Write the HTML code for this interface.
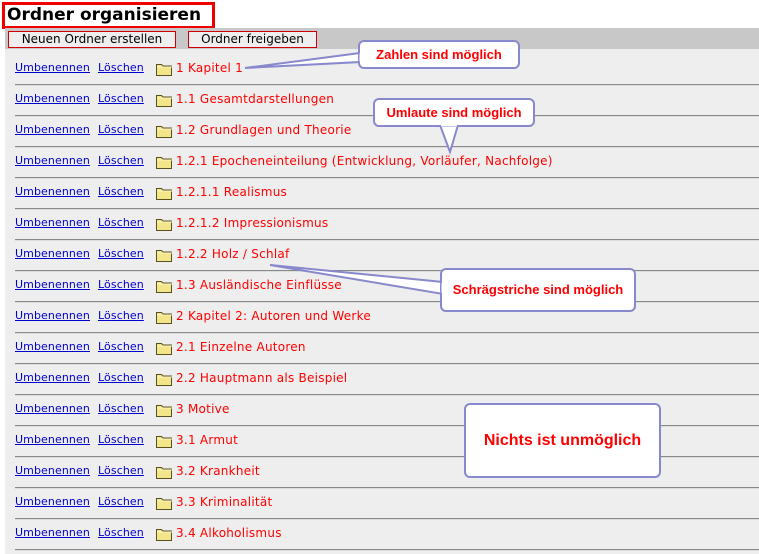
<!DOCTYPE html>
<html><head><meta charset="utf-8"><style>
body{margin:0;width:759px;height:554px;background:#fff;position:relative;overflow:hidden;font-family:"DejaVu Sans",Verdana,sans-serif;font-size:12px}
.title{position:absolute;left:2px;top:2px;width:205px;height:21px;border:3px solid #e00;font-weight:bold;font-size:17px;line-height:21px;padding-left:2px;white-space:nowrap;overflow:hidden}
.bar{position:absolute;left:5px;top:28px;width:754px;height:21px;background:#c8c8c8}
.main{position:absolute;left:5px;top:49px;width:754px;height:505px;background:#eeeeee}
.btn{position:absolute;top:31px;height:15px;border:1px solid #c00;background:#eee;line-height:15px;text-align:center;font-size:12px;color:#000}
.row{position:absolute;left:15px;width:744px;height:16px;line-height:16px}
.row a{color:#00c;text-decoration:underline;position:absolute;top:0;font-size:11px;letter-spacing:0.1px}
.row .t{position:absolute;left:161px;color:#f00;white-space:nowrap;letter-spacing:0.25px}
.row svg{position:absolute;left:141px;top:2px}
.line{position:absolute;left:15px;width:744px;height:1px;background:#888;border-bottom:1px solid #ddd}
.co{position:absolute;background:#fff;border:2px solid #8888cc;border-radius:6px;color:#f00;font-family:"Liberation Sans",Arial,sans-serif;font-weight:bold;font-size:13px;text-align:center;box-sizing:border-box}
svg.tail{position:absolute;left:0;top:0}
</style></head><body>
<div class="title">Ordner organisieren</div>
<div class="bar"></div>
<div class="main"></div>
<div class="btn" style="left:8px;width:166px">Neuen Ordner erstellen</div>
<div class="btn" style="left:188px;width:127px">Ordner freigeben</div>

<div id="rows"></div>
<script>
var items=["1 Kapitel 1","1.1 Gesamtdarstellungen","1.2 Grundlagen und Theorie","1.2.1 Epocheneinteilung (Entwicklung, Vorläufer, Nachfolge)","1.2.1.1 Realismus","1.2.1.2 Impressionismus","1.2.2 Holz / Schlaf","1.3 Ausländische Einflüsse","2 Kapitel 2: Autoren und Werke","2.1 Einzelne Autoren","2.2 Hauptmann als Beispiel","3 Motive","3.1 Armut","3.2 Krankheit","3.3 Kriminalität","3.4 Alkoholismus"];
var h="";
for(var i=0;i<items.length;i++){var y=60+31*i;
h+='<div class="row" style="top:'+y+'px"><a style="left:0">Umbenennen</a><a style="left:83px">Löschen</a><svg width="17" height="14" viewBox="0 0 17 14"><path d="M0.5 2.5h5l1.5 1.5h8.5v9.5h-15z" fill="#f2e58a" stroke="#5a5020"/><path d="M1 5h15" stroke="#fff8c0"/></svg><span class="t">'+items[i]+'</span></div>';
h+='<div class="line" style="top:'+(y+24)+'px"></div>';}
document.getElementById("rows").innerHTML=h;
</script>

<svg class="tail" width="759" height="554">
<polygon points="360,53 245,68 360,62" fill="#fff" stroke="#8888cc" stroke-width="2"/>
<polygon points="440,125 450,152 458,125" fill="#fff" stroke="#8888cc" stroke-width="2"/>
<polygon points="443,282 270,265 443,294" fill="#fff" stroke="#8888cc" stroke-width="2"/>
</svg>
<div class="co" style="left:358px;top:40px;width:162px;height:29px;line-height:25px">Zahlen sind möglich</div>
<div class="co" style="left:373px;top:98px;width:162px;height:29px;line-height:25px">Umlaute sind möglich</div>
<div class="co" style="left:440px;top:268px;width:196px;height:44px;line-height:40px">Schrägstriche sind möglich</div>
<div class="co" style="left:464px;top:403px;width:197px;height:75px;line-height:71px;font-size:16px">Nichts ist unmöglich</div>
<svg class="tail" width="759" height="554" style="pointer-events:none">
<line x1="361" y1="53.5" x2="361" y2="61.5" stroke="#fff" stroke-width="3"/>
<line x1="441" y1="125" x2="457" y2="125" stroke="#fff" stroke-width="3"/>
<line x1="443" y1="283" x2="443" y2="293" stroke="#fff" stroke-width="3"/>
</svg>
</body></html>
